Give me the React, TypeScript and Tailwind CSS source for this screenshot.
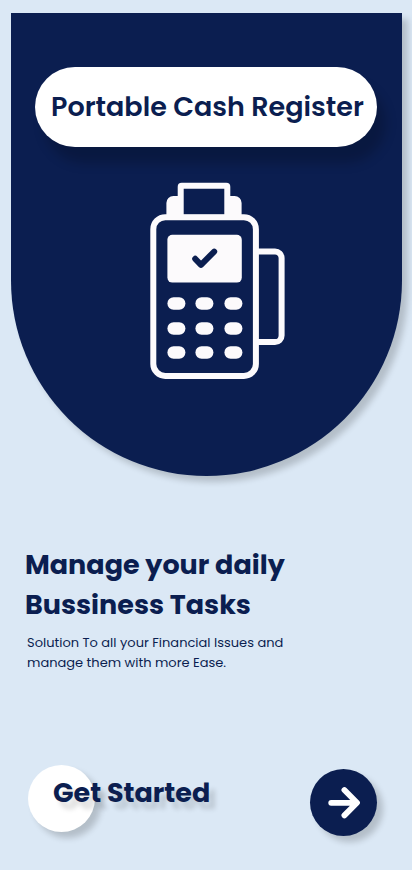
const keyRows = [115, 140, 164];
const keyColumns = [17, 45, 74];

function TerminalIcon() {
  return (
    <svg viewBox="0 0 136 198" className="h-[198px] w-[136px]" fill="none" aria-hidden="true">
      <path d="M16.4 34V21a7 7 0 0 1 7-7h61.2a7 7 0 0 1 7 7v13z" fill="#fcfafc" />
      <rect x="30.7" y="3.7" width="46.6" height="32" rx="1" fill="#0b1e50" stroke="#fcfafc" strokeWidth="6" />
      <rect x="3.3" y="35.2" width="102.6" height="158.8" rx="12" fill="#0b1e50" stroke="#fcfafc" strokeWidth="6" />
      <path d="M108 69.4h17a6.6 6.6 0 0 1 6.6 6.6v77.4a6.6 6.6 0 0 1-6.6 6.6h-17" stroke="#fcfafc" strokeWidth="6" />
      <rect x="17.4" y="52.8" width="74.4" height="47.8" rx="5" fill="#fcfafc" />
      <path
        d="M45.2 76.8l5.8 6 13.2-13.2"
        stroke="#0b1e50"
        strokeWidth="6"
        strokeLinecap="round"
        strokeLinejoin="round"
      />
      {keyRows.map((y) =>
        keyColumns.map((x) => (
          <rect key={`${x}-${y}`} x={x + 0.4} y={y + 0.3} width="18" height="12.4" rx="6.2" fill="#fcfafc" />
        )),
      )}
    </svg>
  );
}

function ArrowIcon() {
  return (
    <svg viewBox="0 0 67 67" className="size-full" fill="none" aria-hidden="true">
      <path
        d="M21.2 33.8H46M34.4 21l12.6 12.8-12.6 12.6"
        stroke="#fff"
        strokeWidth="5.8"
        strokeLinecap="round"
        strokeLinejoin="round"
      />
    </svg>
  );
}

export default function App() {
  return (
    <main className="flex min-h-screen flex-col bg-[#dbe8f5] pt-[13px] pb-[34px] font-[Poppins,Inter,sans-serif] text-[#0b1e50]">
      <header className="mr-[10px] ml-[11px] flex flex-col items-center rounded-b-[196px] bg-[#0b1e50] pr-[25px] pl-6 pt-[54px] pb-24 shadow-[6px_6px_6px_rgba(0,0,0,0.18)]">
        <h1 className="flex h-20 w-full items-center rounded-[40px] bg-white pl-4 text-[27px] leading-10 font-semibold whitespace-nowrap shadow-[9px_16px_12px_rgba(0,0,0,0.2)]">
          Portable Cash Register
        </h1>
        <div className="mt-[35px] ml-6">
          <TerminalIcon />
        </div>
      </header>

      <section className="mt-[69px] px-[25px]">
        <h2 className="text-[27px] leading-10 font-bold">
          Manage your daily
          <br />
          Bussiness Tasks
        </h2>
        <p className="mt-2 ml-0.5 text-[13px] leading-5">
          Solution To all your Financial Issues and
          <br />
          manage them with more Ease.
        </p>
      </section>

      <div className="mt-auto flex items-end justify-between pr-[35px] pl-7">
        <button type="button" className="mb-1 flex items-start">
          <span className="size-[67px] rounded-full bg-white shadow-[6px_6px_6px_rgba(0,0,0,0.18)]" />
          <span className="relative -ml-[42px] pt-2 text-[27px] leading-10 font-bold [text-shadow:6px_7px_5px_rgba(0,0,0,0.15)]">
            Get Started
          </span>
        </button>
        <button
          type="button"
          aria-label="Next"
          className="size-[67px] rounded-full bg-[#0b1e50] shadow-[6px_6px_6px_rgba(0,0,0,0.18)]"
        >
          <ArrowIcon />
        </button>
      </div>
    </main>
  );
}
